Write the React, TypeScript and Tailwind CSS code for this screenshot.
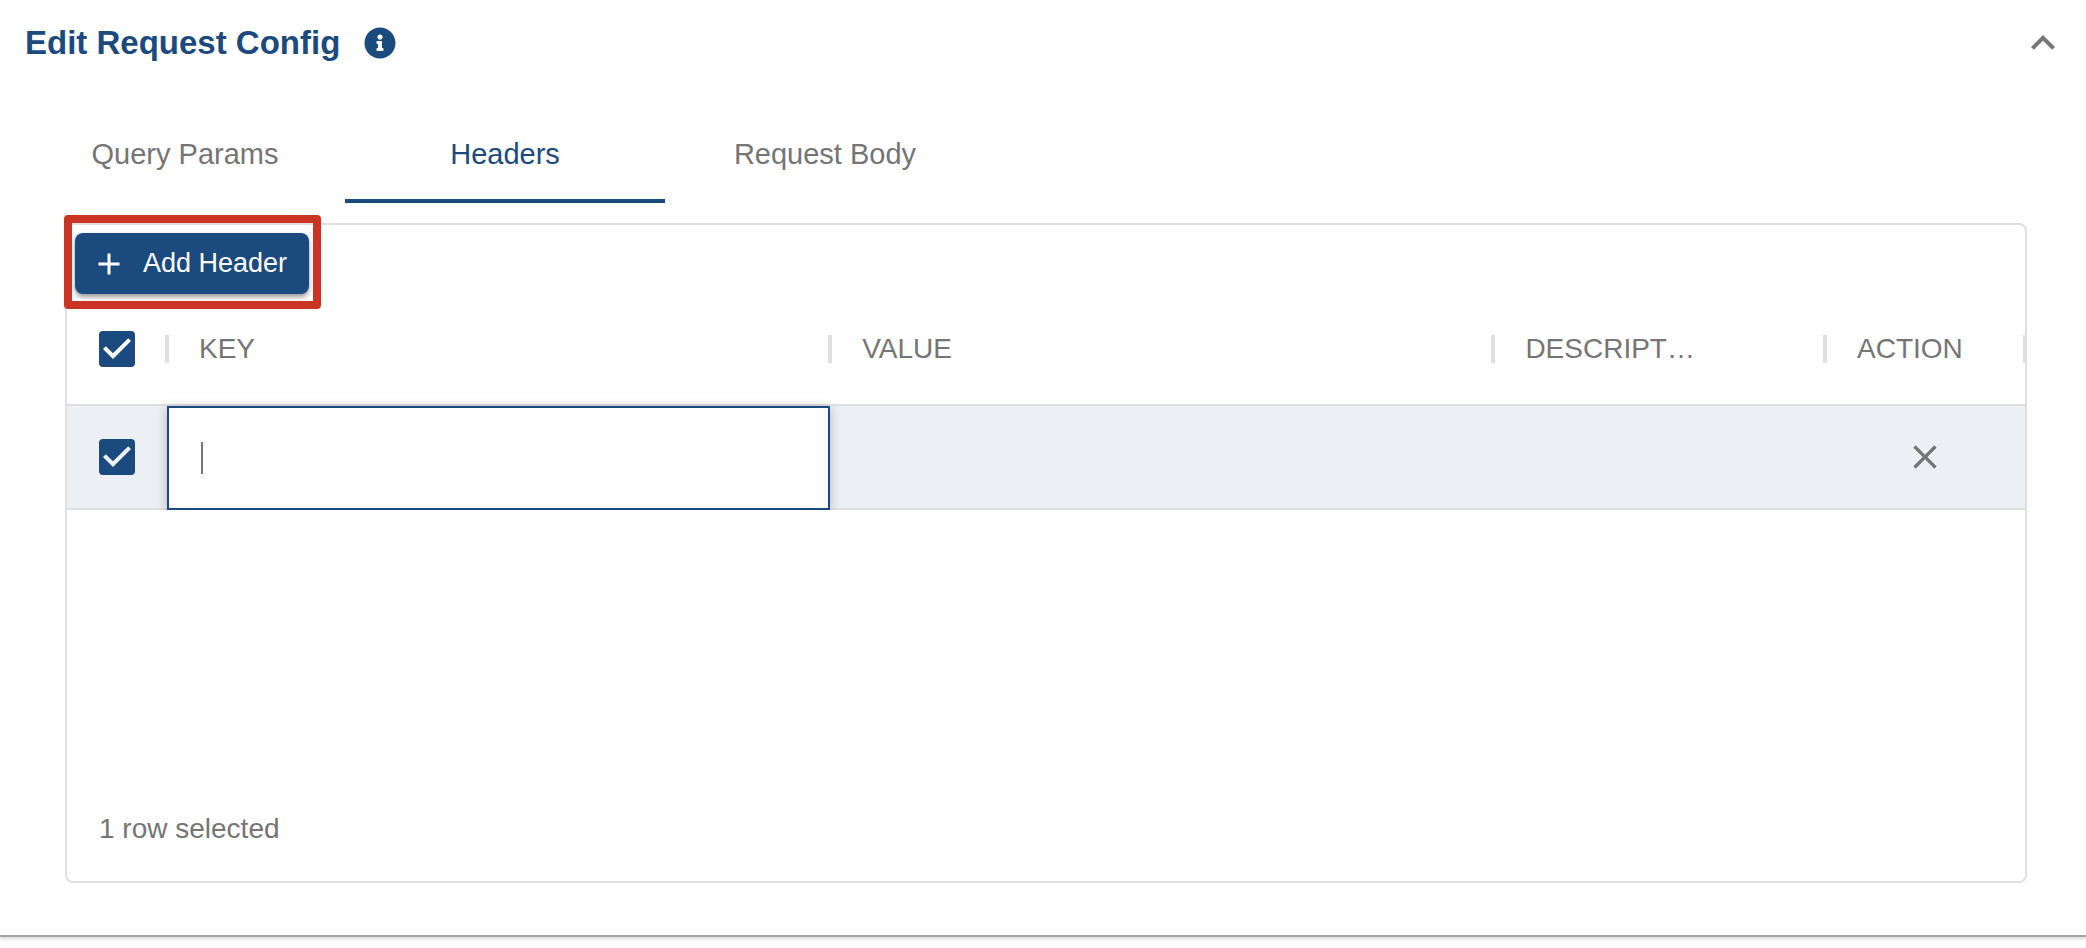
import { useState } from "react";
import { FaInfoCircle } from "react-icons/fa";
import { MdAdd, MdCheckBox, MdCheckBoxOutlineBlank, MdClose, MdExpandLess } from "react-icons/md";

const TABS = ["Query Params", "Headers", "Request Body"];
const ROW = "grid grid-cols-[100px_2fr_2fr_1fr_200px]";

type CheckProps = {
  label: string;
  checked: boolean;
  onChange: (checked: boolean) => void;
};

function Check({ label, checked, onChange }: CheckProps) {
  const Icon = checked ? MdCheckBox : MdCheckBoxOutlineBlank;
  return (
    <label className="relative block size-12 cursor-pointer text-[#1b4a7e]">
      <input
        type="checkbox"
        aria-label={label}
        checked={checked}
        onChange={(e) => onChange(e.target.checked)}
        className="absolute inset-0 size-full appearance-none"
      />
      <Icon className="pointer-events-none size-12" />
    </label>
  );
}

function HeadCell({ children }: { children: string }) {
  return (
    <th scope="col" className="relative flex items-center px-8 text-left font-normal">
      {/* column separator */}
      <span className="absolute top-1/2 -left-0.5 h-7 w-1 -translate-y-1/2 bg-[#e0e0e0]" />
      <span className="truncate">{children}</span>
    </th>
  );
}

export default function App() {
  const [tab, setTab] = useState("Headers");
  const [selected, setSelected] = useState(true);
  const [headerKey, setHeaderKey] = useState("");

  return (
    <div className="min-h-screen bg-[#fcfcfc] font-['Liberation_Sans',Arial,sans-serif] text-[28px] text-[#757575]">
      <section className="border-b-2 border-[#a3a3a3] bg-white pb-[52px] shadow-[0_2px_3px_rgba(0,0,0,0.12)]">
        <header className="flex h-[85px] items-center justify-between pr-[19px] pl-[25px]">
          <div className="flex items-center gap-6 text-[#1b4a7e]">
            <h2 className="text-[33px] leading-10 font-bold">Edit Request Config</h2>
            <FaInfoCircle className="size-8" />
          </div>
          <button type="button" aria-label="Collapse" className="cursor-pointer">
            <MdExpandLess className="size-12" />
          </button>
        </header>

        <div role="tablist" className="mt-[22px] flex pl-[25px]">
          {TABS.map((name) => (
            <button
              key={name}
              type="button"
              role="tab"
              aria-selected={tab === name}
              onClick={() => setTab(name)}
              className={`h-24 w-80 cursor-pointer border-y-4 border-t-transparent text-[29px] ${
                tab === name ? "border-b-[#1b4a7e] text-[#1b4a7e]" : "border-b-transparent"
              }`}
            >
              {name}
            </button>
          ))}
        </div>

        <div className="mt-5 mr-[59px] ml-[65px] rounded-lg border-2 border-[#e0e0e0]">
          <div className="flex pt-2 pl-2">
            <div className="relative">
              <button
                type="button"
                className="flex h-[61px] min-w-[234px] cursor-pointer items-center gap-4 rounded-lg bg-[#1b4a7e] pr-5 pl-4 text-[27px] text-white shadow-[0_3px_5px_rgba(0,0,0,0.4)]"
              >
                <MdAdd className="size-9" />
                Add Header
              </button>
              <span className="pointer-events-none absolute -top-[18px] -right-3 -bottom-[15px] -left-[11px] rounded-sm border-8 border-[#c93423]" />
            </div>
          </div>

          <table className="block overflow-hidden">
            <thead className="block">
              <tr className={`${ROW} h-28 border-b-2 border-[#e0e0e0]`}>
                <th scope="col" className="flex items-center pl-[26px]">
                  <Check label="Select all rows" checked={selected} onChange={setSelected} />
                </th>
                <HeadCell>KEY</HeadCell>
                <HeadCell>VALUE</HeadCell>
                <HeadCell>DESCRIPT…</HeadCell>
                <th scope="col" className="relative flex items-center px-8 text-left font-normal">
                  <span className="absolute top-1/2 -left-0.5 h-7 w-1 -translate-y-1/2 bg-[#e0e0e0]" />
                  ACTION
                  <span className="absolute top-1/2 -right-0.5 h-7 w-1 -translate-y-1/2 bg-[#e0e0e0]" />
                </th>
              </tr>
            </thead>
            <tbody className="block">
              <tr className={`${ROW} h-[104px] ${selected ? "bg-[#ecf0f5]" : "bg-white"}`}>
                <td className="flex items-center border-b-2 border-[#e0e0e0] pl-[26px]">
                  <Check label="Select row" checked={selected} onChange={setSelected} />
                </td>
                <td className="relative border-2 border-[#1b4a7e] bg-white shadow-[0_2px_10px_rgba(0,0,0,0.25)]">
                  <input
                    type="text"
                    aria-label="Key"
                    value={headerKey}
                    onChange={(e) => setHeaderKey(e.target.value)}
                    className="size-full bg-transparent px-8 caret-transparent outline-none"
                  />
                  {headerKey === "" && (
                    <span className="pointer-events-none absolute top-1/2 left-8 h-8 w-0.5 -translate-y-1/2 bg-[#757575]" />
                  )}
                </td>
                <td className="border-b-2 border-[#e0e0e0]" />
                <td className="border-b-2 border-[#e0e0e0]" />
                <td className="flex items-center justify-center border-b-2 border-[#e0e0e0]">
                  <button type="button" aria-label="Remove header" className="cursor-pointer">
                    <MdClose className="size-10" />
                  </button>
                </td>
              </tr>
            </tbody>
          </table>

          <div className="mt-[267px] flex h-[104px] items-center px-8">
            {selected ? "1 row selected" : ""}
          </div>
        </div>
      </section>
    </div>
  );
}
